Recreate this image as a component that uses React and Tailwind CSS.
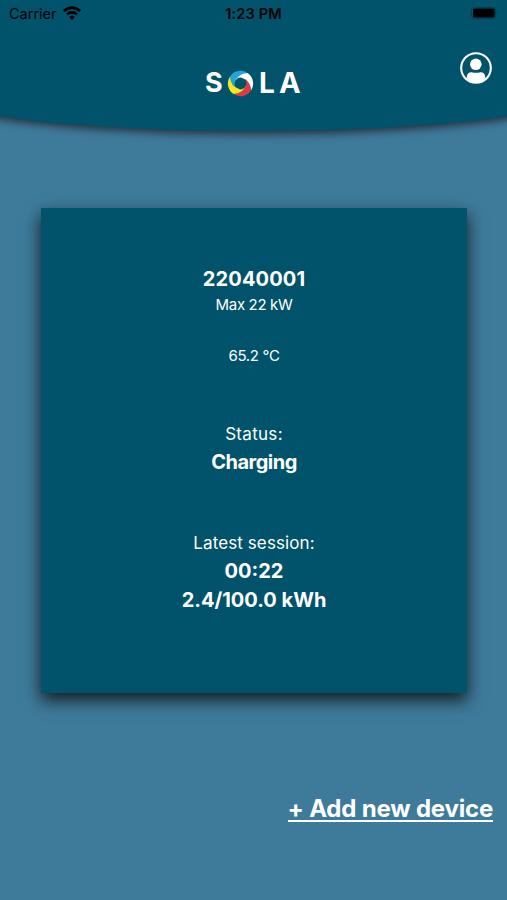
import React from 'react'

const text = {
  id: '22040001',
  power: 'Max 22 kW',
  temperature: '65.2 °C',
  status: 'Charging',
  time: '00:22',
  energy: '2.4/100.0 kWh',
}

// one blade of the logo, repeated every 90 degrees
const blade = 'M7-10.5Q-3-10-5.8-1A5.8 5.8 0 0 0-1 5.8Q-10 3-10.5-7A12.6 12.6 0 0 1 7-10.5Z'
const bladeColors = ['#20a6db', '#ffffff', '#df3947', '#f5e620']

function StatusBar() {
  return (
    <div className="grid h-[28px] grid-cols-3 items-center text-[14.5px] leading-[28px] text-black">
      <div className="flex items-center gap-[6px] pl-[9px]">
        <span>Carrier</span>
        <svg className="-mt-[2px] h-[14px] w-[18px]" viewBox="0 0 18 14" fill="none" stroke="black" strokeWidth="2.7">
          <path d="M.9 5.1C5.5.5 12.5.5 17.1 5.1" />
          <path d="M3.9 8.4C6.8 5.6 11.2 5.6 14.1 8.4" />
          <path d="M6.2 10.9C7.8 9.3 10.2 9.3 11.8 10.9L9 13.9Z" fill="black" stroke="none" />
        </svg>
      </div>
      <span className="text-center font-semibold tracking-[0.15px]">1:23 PM</span>
      <div className="flex items-center justify-end pr-[8px]">
        <svg className="-mt-[2px] h-[12px] w-[28px]" viewBox="0 0 28 12">
          <rect x=".5" y=".5" width="24" height="11" rx="3" fill="none" stroke="#003f50" />
          <rect x="2" y="1.5" width="21.5" height="9" rx="1.5" fill="black" />
          <path d="M26 4Q28 6 26 8Z" fill="#003f50" />
        </svg>
      </div>
    </div>
  )
}

function Logo() {
  return (
    <div className="flex w-[97px] items-center text-[29px] leading-[32px] font-bold text-white">
      <span className="w-[22px] text-[27px]">S</span>
      <svg className="h-[27px] w-[27px] shrink-0" viewBox="-13.5 -13.5 27 27">
        {bladeColors.map((color, i) => (
          <path key={color} d={blade} fill={color} transform={`rotate(${i * 90})`} />
        ))}
      </svg>
      <span className="ml-[5px] w-[20px] text-[28px]">L</span>
      <span>A</span>
    </div>
  )
}

function ProfileIcon() {
  return (
    <svg className="h-[34px] w-[34px]" viewBox="0 0 34 34">
      <circle cx="17" cy="17" r="14.8" fill="none" stroke="white" strokeWidth="2.1" />
      <circle cx="16.8" cy="13.3" r="5.8" fill="white" />
      <path d="M7.700 27V26Q8 21.3 12.5 21.3Q17 22.3 21.5 21.3Q26 21.3 26.300 26V27L23 31H11Z" fill="white" />
    </svg>
  )
}

export default function App() {
  return (
    <main className="flex h-[900px] w-[507px] flex-col overflow-hidden bg-[#3e7b9b] font-[Inter,sans-serif] text-white">
      <header className="-mx-[77px] h-[131px] shrink-0 rounded-[0_0_50%_50%/0_0_41px_41px] bg-[#00536a] px-[77px] shadow-[0_2px_8px_1px_rgba(35,38,45,0.9)]">
        <StatusBar />
        <div className="grid grid-cols-[1fr_auto_1fr] pt-[23px]">
          <div />
          <div className="pt-[16px]">
            <Logo />
          </div>
          <div className="flex justify-end pr-[14px]">
            <ProfileIcon />
          </div>
        </div>
      </header>

      <section className="mx-[41px] mt-[77px] h-[485px] w-[426px] shrink-0 bg-[#00536a] pt-[57px] text-center shadow-[0_7px_16px_0px_rgba(20,20,24,0.95)]">
        <h1 className="text-[20px] leading-[28px] font-bold tracking-[0.15px]">{text.id}</h1>
        <p className="text-[15px] leading-[24px] tracking-[-0.35px]">{text.power}</p>
        <p className="mt-[27px] text-[15px] leading-[24px] tracking-[-0.3px]">{text.temperature}</p>

        <p className="mt-[52px] text-[17px] leading-[28px] tracking-[0.3px]">Status:</p>
        <p className="text-[20px] leading-[29px] font-bold tracking-[-0.5px]">{text.status}</p>

        <p className="mt-[52px] text-[17px] leading-[28px] tracking-[0.1px]">Latest session:</p>
        <p className="text-[20px] leading-[29px] font-bold">{text.time}</p>
        <p className="text-[20px] leading-[29px] font-bold">{text.energy}</p>
      </section>

      <div className="mt-[102px] flex justify-end pr-[14px]">
        <button className="h-[27px] border-b-2 border-white text-[24px] leading-[28px] font-bold tracking-[-0.2px]">
          + Add new device
        </button>
      </div>
    </main>
  )
}
